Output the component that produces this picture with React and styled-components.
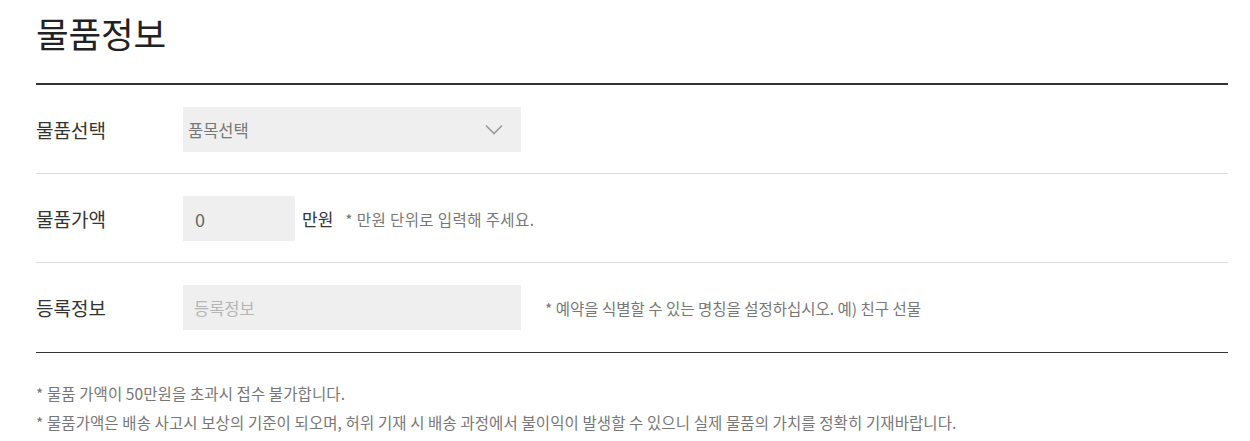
import React from "react";
import styled, { createGlobalStyle } from "styled-components";

const Global = createGlobalStyle`
  html, body { margin: 0; padding: 0; background: #fff; }
  body { font-family: "Noto Sans CJK KR", "Noto Sans", sans-serif; color: #333; }
`;

const Page = styled.div`
  padding: 0 22px 0 36px;
`;

const Title = styled.h2`
  margin: 0;
  height: 83px;
  padding-top: 8px;
  box-sizing: border-box;
  font-size: 35.5px;
  font-weight: 400;
  line-height: 50px;
  letter-spacing: -0.2px;
  color: #222;
`;

const Table = styled.div`
  border-top: 2px solid #333;
  border-bottom: 1px solid #333;
`;

const Row = styled.div`
  display: flex;
  align-items: center;
  padding: 22px 0 ${(p) => (p.$last ? "22px" : "21px")};
  border-bottom: ${(p) => (p.$last ? "none" : "1px solid #dcdcdc")};
`;

const Label = styled.div`
  width: 147px;
  flex: none;
  font-size: 19px;
  color: #333;
`;

const Field = styled.div`
  display: flex;
  align-items: center;
  justify-content: space-between;
  box-sizing: border-box;
  width: ${(p) => p.$w}px;
  height: 45px;
  padding: 0 18px 0 ${(p) => p.$pl || 5}px;
  background: #efefef;
  font-size: ${(p) => p.$fs || 16.5}px;
  color: ${(p) => p.$color || "#777"};
`;

const Unit = styled.span`
  margin-left: 7px;
  font-size: 17px;
  color: #333;
`;

const Hint = styled.span`
  margin-left: ${(p) => p.$ml}px;
  font-size: 15.5px;
  letter-spacing: ${(p) => p.$ls || 0}px;
  color: #777;
`;

const Notes = styled.ul`
  list-style: none;
  margin: 0;
  padding: 26px 0 0;
`;

const Note = styled.li`
  font-size: 15.5px;
  line-height: 29px;
  letter-spacing: 0.1px;
  color: #777;
`;

const Chevron = () => (
  <svg width="18" height="11" viewBox="0 0 18 11" fill="none">
    <path d="M1 1.5 L9 9.5 L17 1.5" stroke="#9a9a9a" strokeWidth="1.6" />
  </svg>
);

export default function App() {
  return (
    <Page>
      <Global />
      <Title>물품정보</Title>
      <Table>
        <Row>
          <Label>물품선택</Label>
          <Field $w={338}>
            <span>품목선택</span>
            <Chevron />
          </Field>
        </Row>
        <Row>
          <Label>물품가액</Label>
          <Field $w={112} $pl={12} $fs={18} $color="#666">0</Field>
          <Unit>만원</Unit>
          <Hint $ml={12} $ls={0.4}>* 만원 단위로 입력해 주세요.</Hint>
        </Row>
        <Row $last>
          <Label>등록정보</Label>
          <Field $w={338} $pl={11} $color="#b5b5b5">등록정보</Field>
          <Hint $ml={24}>* 예약을 식별할 수 있는 명칭을 설정하십시오. 예) 친구 선물</Hint>
        </Row>
      </Table>
      <Notes>
        <Note>* 물품 가액이 50만원을 초과시 접수 불가합니다.</Note>
        <Note>* 물품가액은 배송 사고시 보상의 기준이 되오며, 허위 기재 시 배송 과정에서 불이익이 발생할 수 있으니 실제 물품의 가치를 정확히 기재바랍니다.</Note>
      </Notes>
    </Page>
  );
}
